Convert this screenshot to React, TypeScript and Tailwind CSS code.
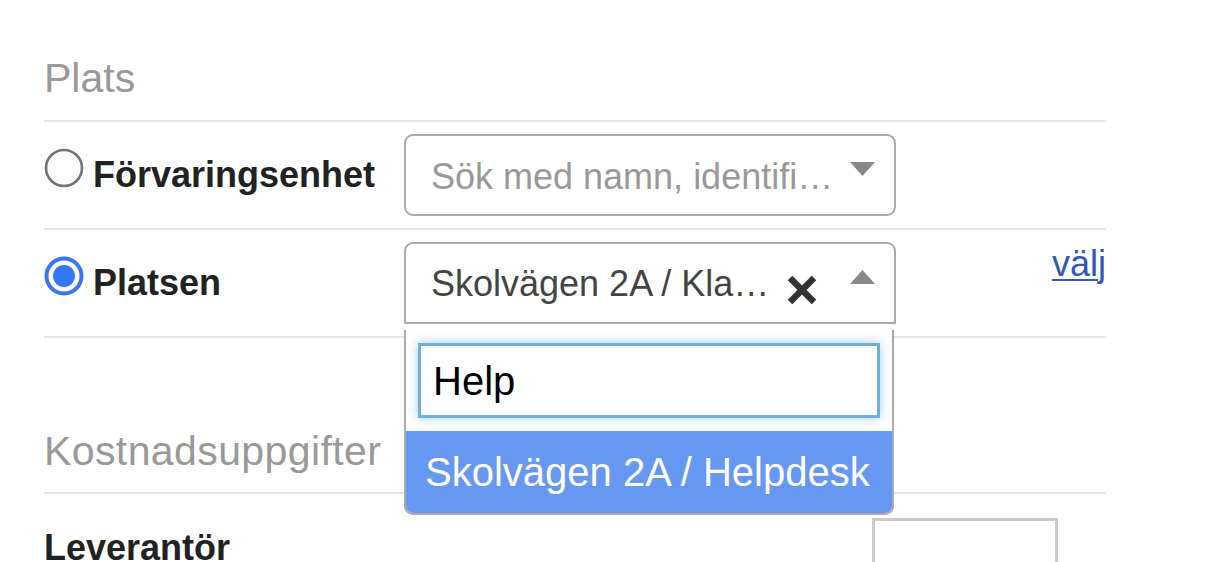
import React from "react";

function Radio({ checked }: { checked: boolean }) {
  return (
    <svg width="40" height="40" viewBox="0 0 40 40" className="shrink-0 mb-[14px]">
      {checked ? (
        <>
          <circle cx="20" cy="20" r="17.5" fill="#fff" stroke="#3478f6" strokeWidth="4" />
          <circle cx="20" cy="20" r="11" fill="#3478f6" />
        </>
      ) : (
        <circle cx="20" cy="20" r="18" fill="#fff" stroke="#737373" strokeWidth="2.6" />
      )}
    </svg>
  );
}

function Arrow({ up }: { up?: boolean }) {
  return (
    <svg width="25" height="14" viewBox="0 0 25 14" className="shrink-0 mb-[12px]">
      {up ? <polygon points="0,14 25,14 12.5,0" fill="#888" /> : <polygon points="0,0 25,0 12.5,14" fill="#888" />}
    </svg>
  );
}

export default function App() {
  return (
    <div
      className="w-[1220px] h-[562px] overflow-hidden bg-white"
      style={{ fontFamily: "'Liberation Sans', Arial, Helvetica, sans-serif" }}
    >
      <div className="w-[1150px] pl-[44px] pt-[54px]">
        <div className="w-[1062px]">
          <div className="text-[41px] leading-[48px] text-[#999] pb-[18px] border-b-2 border-[#e5e5e5]">Plats</div>

          {/* Row 1 */}
          <div className="flex items-center py-[12px] border-b-2 border-[#e5e5e5]">
            <div className="w-[360px] flex items-center shrink-0">
              <Radio checked={false} />
              <span className="ml-[9px] text-[36px] leading-[40px] font-bold text-[#222]">Förvaringsenhet</span>
            </div>
            <div className="w-[492px] h-[82px] border-2 border-[#aaa] rounded-[9px] flex items-center pl-[25px] pr-[19px] bg-white">
              <span className="flex-1 text-[36px] leading-[40px] text-[#999] pt-[3px] whitespace-nowrap overflow-hidden">
                Sök med namn, identifi…
              </span>
              <Arrow />
            </div>
          </div>

          {/* Row 2 */}
          <div className="flex items-center py-[12px] border-b-2 border-[#e5e5e5]">
            <div className="w-[360px] flex items-center shrink-0">
              <Radio checked={true} />
              <span className="ml-[9px] text-[36px] leading-[40px] font-bold text-[#222]">Platsen</span>
            </div>
            <div className="relative w-[492px] h-[82px] shrink-0">
              <div className="w-full h-full border-2 border-[#aaa] rounded-t-[9px] flex items-center pl-[25px] pr-[19px] bg-white">
                <span className="text-[36px] leading-[40px] text-[#444] pt-[2px] whitespace-nowrap">Skolvägen 2A / Kla…</span>
                <svg width="32" height="32" viewBox="0 0 32 32" className="ml-[17px] mt-[14px] shrink-0">
                  <line x1="4" y1="4" x2="28" y2="28" stroke="#333" strokeWidth="6.5" />
                  <line x1="28" y1="4" x2="4" y2="28" stroke="#333" strokeWidth="6.5" />
                </svg>
                <div className="flex-1" />
                <Arrow up />
              </div>
              <div className="absolute left-0 top-[88px] w-[490px] h-[185px] border-2 border-t-0 border-[#aaa] rounded-b-[9px] bg-white overflow-hidden z-10">
                <div className="pt-[13px] px-[12px] pb-[13px]">
                  <div className="h-[75px] border-[3px] border-[#70afd8] shadow-[0_0_10px_rgba(82,168,236,0.55)] flex items-center pl-[12px] bg-white">
                    <span className="text-[40px] leading-[46px] text-black">Help</span>
                  </div>
                </div>
                <div className="h-[82px] bg-[#6698f2] flex items-center pl-[19px]">
                  <span className="text-[40px] leading-[46px] text-white whitespace-nowrap">Skolvägen 2A / Helpdesk</span>
                </div>
              </div>
            </div>
            <div className="flex-1 self-start flex justify-end mt-[2px]">
              <a className="text-[36px] leading-[40px] text-[#2f58b9] underline decoration-2 underline-offset-[3px]" href="#">
                välj
              </a>
            </div>
          </div>

          <div className="mt-[89px] text-[41px] leading-[48px] tracking-[0.4px] text-[#999] pb-[17px] border-b-2 border-[#e5e5e5]">
            Kostnadsuppgifter
          </div>

          <div className="flex items-start pt-[24px]">
            <span className="w-[828px] mt-[10px] text-[36px] leading-[40px] font-bold text-[#222]">Leverantör</span>
            <div className="w-[186px] h-[70px] border-[3px] border-[#ccc] bg-white" />
          </div>
        </div>
      </div>
    </div>
  );
}
